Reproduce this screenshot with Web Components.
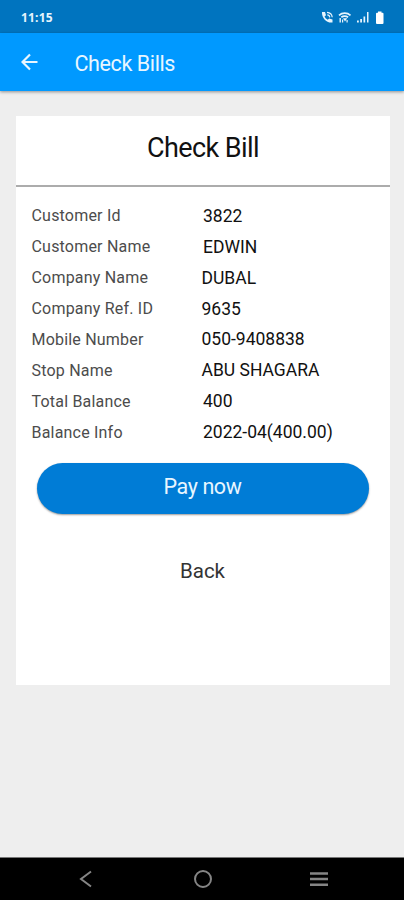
<!DOCTYPE html>
<html lang="en">
<head>
<meta charset="utf-8">
<meta name="viewport" content="width=device-width, initial-scale=1">
<title>Check Bills</title>
<style>
  html, body {
    height: 100%;
    margin: 0;
  }
  body {
    --status-color: #0074bf;
    --primary-color: #0099ff;
    --button-color: #007cd6;
    --page-bg: #eeeeee;
    display: flex;
    flex-direction: column;
    overflow: hidden;
    background: var(--page-bg);
    font-family: Roboto, "Liberation Sans", sans-serif;
  }
  main {
    flex: 1;
    padding: 25px 14px 0 16px;
  }
</style>
</head>
<body>
<status-bar time="11:15"></status-bar>
<app-header title="Check Bills"></app-header>
<main>
  <bill-card>
    <span slot="title">Check Bill</span>
    <bill-row label="Customer Id" inset>3822</bill-row>
    <bill-row label="Customer Name" inset>EDWIN</bill-row>
    <bill-row label="Company Name">DUBAL</bill-row>
    <bill-row label="Company Ref. ID">9635</bill-row>
    <bill-row label="Mobile Number">050-9408838</bill-row>
    <bill-row label="Stop Name">ABU SHAGARA</bill-row>
    <bill-row label="Total Balance" inset>400</bill-row>
    <bill-row label="Balance Info" inset>2022-04(400.00)</bill-row>
    <action-button slot="actions" kind="primary">Pay now</action-button>
    <action-button slot="actions" kind="plain">Back</action-button>
  </bill-card>
</main>
<nav-bar></nav-bar>

<script>
// Phone status bar: clock on the left, signal icons on the right
class StatusBar extends HTMLElement {
  constructor() {
    super();
    this.attachShadow({ mode: "open" });
  }

  connectedCallback() {
    this.shadowRoot.innerHTML = `
      <style>
        :host {
          display: flex;
          align-items: center;
          justify-content: space-between;
          box-sizing: border-box;
          height: 33px;
          padding: 1px 18px 0 21px;
          background: var(--status-color);
          color: #e6f4fd;
        }
        .time {
          padding-top: 1px;
          font: 700 12px/14px "Open Sans", sans-serif;
          letter-spacing: 0.2px;
        }
        svg {
          display: block;
        }
      </style>
      <span class="time">${this.getAttribute("time")}</span>
      <svg width="65" height="16" viewBox="0 0 65 16" fill="currentColor">
        <!-- call -->
        <path d="M1 3h3l1 3.2-1.5 1.4c.8 1.5 1.8 2.5 3.2 3.2l1.5-1.4 3.3 1v3.1C6 14.5.5 9 1 3z"/>
        <path d="M6 3.3c3 .2 5 2.2 5.2 5M6.3 5.8c1.4.1 2.3 1 2.5 2.5" fill="none" stroke="currentColor" stroke-width="1.2"/>
        <!-- wifi -->
        <path d="M18 6.3c3.3-3 8.2-3 11.5 0M20.3 8.3c2-1.5 4.7-1.5 6.8 0" fill="none" stroke="currentColor" stroke-width="1.7"/>
        <path d="M22 9.2h4.2L24 12.5zM18.5 9h1.4v4.5h-1.4zM21 10.5h1.2v3H21zM25.5 11h1.2v2.5h-1.2z"/>
        <!-- mobile signal -->
        <path d="M36 11.5h1.8v2H36zM39.2 10h1.8v3.5h-1.8zM42.5 7.5h1.7v6h-1.7zM46 3h1.5v10.5H46z"/>
        <!-- battery -->
        <path d="M57 2.5h3.5v1.2h1a1 1 0 0 1 1 1V14a1 1 0 0 1-1 1H56a1 1 0 0 1-1-1V4.7a1 1 0 0 1 1-1h1z" fill="#fff"/>
      </svg>
    `;
  }
}

// Blue header with the back arrow
class AppHeader extends HTMLElement {
  constructor() {
    super();
    this.attachShadow({ mode: "open" });
  }

  connectedCallback() {
    const title = this.getAttribute("title") || "";

    this.shadowRoot.innerHTML = `
      <style>
        :host {
          display: flex;
          align-items: center;
          gap: 36.5px;
          height: 58px;
          padding-left: 21px;
          background: var(--primary-color);
          color: #e8f6ff;
          box-shadow: 0 1px 3px rgba(0, 0, 0, 0.4);
        }
        h1 {
          margin: 0;
          padding-top: 3px;
          font-size: 21.5px;
          font-weight: 400;
          line-height: 28px;
          letter-spacing: -0.4px;
        }
      </style>
      <svg width="17" height="18" viewBox="0 0 17 18" fill="none" stroke="currentColor" stroke-width="2.2">
        <path d="M16.5 9H2M9 1.5L1.5 9 9 16.5"/>
      </svg>
      <h1>${title}</h1>
    `;
  }
}

// White card: title, rule, rows and actions
class BillCard extends HTMLElement {
  constructor() {
    super();
    this.attachShadow({ mode: "open" });
  }

  connectedCallback() {
    this.shadowRoot.innerHTML = `
      <style>
        :host {
          display: block;
          height: 569px;
          background: #fff;
        }
        h2 {
          margin: 0;
          height: 71px;
          box-sizing: border-box;
          padding-top: 16px;
          border-bottom: 2px solid #acacac;
          font-size: 27px;
          font-weight: 400;
          line-height: 32px;
          letter-spacing: -0.6px;
          text-align: center;
          color: #111;
        }
        .rows {
          padding: 13.4px 0 0 15.5px;
        }
        .actions {
          display: flex;
          flex-direction: column;
          gap: 33px;
          padding: 15.4px 21.5px 0 20.5px;
        }
      </style>
      <h2><slot name="title"></slot></h2>
      <div class="rows"><slot></slot></div>
      <div class="actions"><slot name="actions"></slot></div>
    `;
  }
}

// Label and value pair
class BillRow extends HTMLElement {
  constructor() {
    super();
    this.attachShadow({ mode: "open" });
  }

  connectedCallback() {
    this.shadowRoot.innerHTML = `
      <style>
        :host {
          display: flex;
          align-items: center;
          height: 30.9px;
          white-space: nowrap;
        }
        .label {
          width: 170px;
          font-size: 16px;
          letter-spacing: 0.2px;
          color: #4c4c4c;
        }
        .value {
          font-size: 17.5px;
          color: #111;
        }
        :host([inset]) .value {
          padding-left: 1.5px;
        }
      </style>
      <span class="label">${this.getAttribute("label")}</span>
      <span class="value"><slot></slot></span>
    `;
  }
}

// Card button, filled or text only
class ActionButton extends HTMLElement {
  constructor() {
    super();
    this.attachShadow({ mode: "open" });
  }

  connectedCallback() {
    this.shadowRoot.innerHTML = `
      <style>
        :host {
          display: block;
        }
        button {
          display: block;
          width: 100%;
          height: 51px;
          padding: 0 0 3px;
          border: 0;
          border-radius: 26px;
          background: none;
          font: 400 20.5px/26px Roboto, sans-serif;
          color: #333;
        }
        :host([kind="primary"]) button {
          background: var(--button-color);
          color: #e8f6ff;
          font-size: 21.5px;
          letter-spacing: -0.4px;
          box-shadow: 0 1px 2px rgba(0, 0, 0, 0.4);
        }
      </style>
      <button type="button"><slot></slot></button>
    `;
  }
}

// System navigation: back, home, recents
class NavBar extends HTMLElement {
  constructor() {
    super();
    this.attachShadow({ mode: "open" });
  }

  connectedCallback() {
    this.shadowRoot.innerHTML = `
      <style>
        :host {
          display: flex;
          align-items: center;
          justify-content: space-between;
          box-sizing: border-box;
          height: 43px;
          padding: 0 75px 0 76px;
          border-top: 1px solid #777;
          background: #000;
          color: #858585;
        }
      </style>
      <svg width="20" height="20" viewBox="0 0 20 20" fill="none" stroke="currentColor" stroke-width="2">
        <path d="M15 2.5L5 10l10 7.5"/>
      </svg>
      <svg width="20" height="20" viewBox="0 0 20 20" fill="none" stroke="currentColor" stroke-width="2">
        <circle cx="10" cy="10" r="8"/>
      </svg>
      <svg width="20" height="20" viewBox="0 0 20 20" fill="none" stroke="currentColor" stroke-width="2.5">
        <path d="M1 4.5h18M1 10h18M1 15.7h18"/>
      </svg>
    `;
  }
}

customElements.define("status-bar", StatusBar);
customElements.define("app-header", AppHeader);
customElements.define("bill-card", BillCard);
customElements.define("bill-row", BillRow);
customElements.define("action-button", ActionButton);
customElements.define("nav-bar", NavBar);
</script>
</body>
</html>
